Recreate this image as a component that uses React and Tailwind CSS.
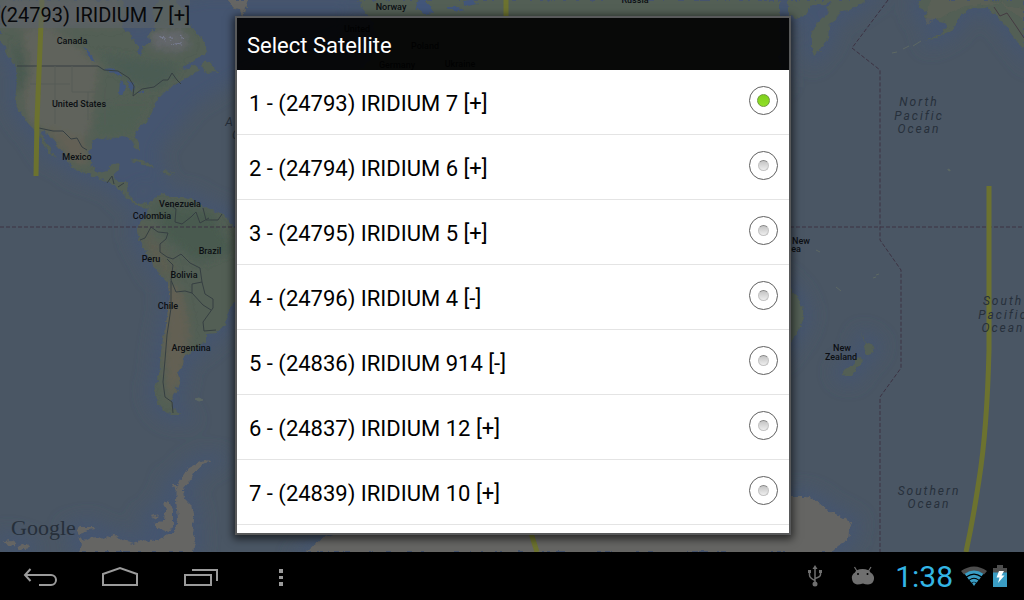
import { useState } from 'react';

const satellites = [
  { id: 24793, name: 'IRIDIUM 7 [+]' },
  { id: 24794, name: 'IRIDIUM 6 [+]' },
  { id: 24795, name: 'IRIDIUM 5 [+]' },
  { id: 24796, name: 'IRIDIUM 4 [-]' },
  { id: 24836, name: 'IRIDIUM 914 [-]' },
  { id: 24837, name: 'IRIDIUM 12 [+]' },
  { id: 24839, name: 'IRIDIUM 10 [+]' },
];

// Country labels, anchored on their centre.
const countries = [
  ['Canada', 72, 44],
  ['United States', 79, 107],
  ['Mexico', 77, 160],
  ['Venezuela', 180, 207],
  ['Colombia', 152, 219],
  ['Brazil', 210, 254],
  ['Peru', 151, 262],
  ['Bolivia', 184, 278],
  ['Chile', 168, 309],
  ['Argentina', 191, 351],
  ['Norway', 391, 10],
  ['Russia', 635, 3],
  ['United', 357, 32],
  ['Poland', 425, 49],
  ['Germany', 397, 68],
  ['Ukraine', 460, 67],
  ['New', 801, 244],
  ['ea', 796, 252],
  ['New', 842, 351],
  ['Zealand', 841, 360],
];

const oceans = [
  ['North', 919, 106],
  ['Pacific', 919, 120],
  ['Ocean', 919, 133],
  ['South', 1003, 305],
  ['Pacific', 1003, 319],
  ['Ocean', 1003, 332],
  ['Southern', 929, 495],
  ['Ocean', 929, 508],
  ['A', 230, 126],
  ['O', 237, 139],
];

const land = {
  northAmerica:
    'M0 0H122L126 14 122 28 130 33 134 43 138 47 138 54 142 55 143 46 150 41 149 34 156 26 152 12 158 0H176L184 10 190 24 197 33 204 42 208 50 204 56 196 60 188 63 181 68 188 69 196 64 200 70 192 75 184 80 178 83 168 89 160 97 153 107 150 117 141 126 135 134 139 143 139 150 135 148 131 138 122 136 112 139 101 138 92 142 89 151 92 165 98 173 107 171 111 165 119 163 117 171 113 178 119 182 128 182 127 191 133 200 140 204 147 202 148 205 140 207 132 203 124 194 116 186 108 182 100 178 88 174 76 170 69 165 67 158 59 147 51 137 44 130 40 133 48 145 57 159 52 156 44 146 38 134 27 122 20 112 15 100 17 82 16 67 9 57 4 46 0 40Z',
  southAmerica:
    'M140 205 148 204 157 196 163 193 168 197 185 197 197 201 203 208 215 211 224 214 232 226 240 232V296L235 300 229 313 224 325 217 333 206 334 206 342 198 348 190 353 184 357 183 365 177 373 180 381 176 391 172 399 173 407 181 415 171 415 163 410 157 402 154 391 159 375 161 352 164 333 168 312 169 294 168 282 156 271 149 257 141 244 137 235 138 226 144 218 148 209Z',
  alaska:
    'M919 0 918 8 928 12 924 17 935 20 945 22 948 26 942 33 924 41 934 39 950 31 958 23 960 16 970 8 984 7 996 14 1004 24 1012 35 1024 50V0Z',
  asia:
    'M788 0H866L851 10 840 11 836 20 830 24 828 38 822 48 814 56 811 47 811 35 816 24 827 13 830 2 822 5 812 5 806 15 797 18 788 15Z',
  europe: 'M358 0 362 8 372 20 378 40 370 60 350 80H780V0Z',
  greenland: 'M227 0 233 7 239 9 243 16 248 0Z',
  australia: 'M784 284 791 290 797 297 803 309 804 318 799 330 792 340 786 348Z',
  newZealand:
    'M861 333 866 342 874 345 871 353 866 355 863 348 865 343ZM858 356 863 360 857 368 852 376 845 376 842 372 852 365Z',
};

const ice = {
  west: 'M78 552 82 544 78 537 87 541 96 536 103 539 114 535 120 540 133 544 142 540 152 541 165 537 174 533 178 519 176 500 177 487 182 477 188 468 198 463 205 460 211 461 203 465 194 473 190 481 183 489 184 498 191 505 194 520 192 534 196 538 193 552ZM163 502 169 501 173 511 173 526 169 532 159 529 153 524 165 520 166 511Z',
  westIslets:
    'M76 530 82 527 94 527 95 530 88 531 80 534ZM4 541 12 540 16 546 9 547ZM18 546 27 544 30 548 20 550ZM152 517 158 515 156 519ZM172 484 177 484 176 492Z',
  south: 'M306 552 318 541 334 533H792V552Z',
  east: 'M784 497H806L818 502 828 511 843 518 853 524 849 531 848 540 839 546 833 552H784Z',
};

const borders =
  'M17 66H98L104 70 118 71 129 78 134 86 133 96 142 89 154 87 163 80 168 80 172 73 177 80 181 84M39 128 53 131 63 131 71 139 77 138 82 147 87 150M140 240 145 238 151 227 158 232 168 233M170 205 176 209 175 222 182 224 191 217 196 212 200 223 209 218M203 208 206 220 218 220 222 214M168 233 166 239 160 244 160 252 167 257 173 259 181 254 190 263 200 268 202 282M167 259 173 265 171 280 176 292 185 291 192 293 203 305 211 310M192 293 192 284 202 282 205 294 213 299 213 308 203 322 204 331 216 330M171 281 171 308 167 335 165 360 163 382 165 397 172 402 173 413M107 183 112 176 114 184M118 187 124 183';

function WorldMap() {
  return (
    <svg
      viewBox="0 0 1024 552"
      preserveAspectRatio="xMidYMid slice"
      className="absolute inset-0 size-full bg-[#4a5664]"
      aria-hidden="true"
    >
      <defs>
        <filter id="soft" x="-30%" y="-30%" width="160%" height="160%">
          <feGaussianBlur stdDeviation="9" />
        </filter>
        <filter id="patch" x="-20%" y="-20%" width="140%" height="140%">
          <feGaussianBlur stdDeviation="4" />
        </filter>
        {/* roughens the coastlines */}
        <filter id="coast" x="0" y="0" width="100%" height="100%">
          <feTurbulence type="fractalNoise" baseFrequency="0.18" numOctaves="3" seed="4" result="noise" />
          <feDisplacementMap in="SourceGraphic" in2="noise" scale="6" xChannelSelector="R" yChannelSelector="G" />
        </filter>
        <clipPath id="na">
          <path d={land.northAmerica} />
        </clipPath>
        <clipPath id="sa">
          <path d={land.southAmerica} />
        </clipPath>
      </defs>

      {/* shallow water along the coasts */}
      <g filter="url(#soft)" fill="#44556f" stroke="#44556f" strokeWidth="14">
        {Object.values(land).map((d) => <path key={d} d={d} />)}
        {Object.values(ice).map((d) => <path key={d} d={d} />)}
        <path d="M130 40 200 0H345V30L240 70 190 100 150 150 160 180 130 180 90 150V80Z" />
      </g>

      <g filter="url(#coast)">
        <g fill="#525e54">
          {Object.values(land).map((d) => <path key={d} d={d} />)}
          <path d="M130 161 138 159 148 162 156 168 150 167 141 163ZM160 171 167 170 174 173 168 174ZM201 66 206 60 210 62 218 72 206 73Z" />
        </g>
        <g fill="#656563">
          {Object.values(ice).map((d) => <path key={d} d={d} />)}
          <path d={land.greenland} />
        </g>

        <g clipPath="url(#na)">
          <g filter="url(#patch)">
            <path d="M22 30 50 28 70 40 88 55 100 66 96 90 90 130 84 142 70 140 30 125 22 100 30 72Z" fill="#61645b" />
            <path d="M45 128 84 140 90 160 76 166Z" fill="#636054" />
            <path d="M0 0H120V26H0Z" fill="#5f625f" />
            <path d="M150 32 180 28 192 45 178 52 152 48Z" fill="#63666a" />
            <path d="M100 55 136 60 180 66 160 88 135 84 112 66Z" fill="#4b5c52" />
            <path d="M16 40 26 60 24 95 16 90Z" fill="#4a5950" />
            <path d="M100 110 145 100 132 132 96 136Z" fill="#505e52" />
          </g>
        </g>
        <g clipPath="url(#sa)">
          <g filter="url(#patch)">
            <path d="M152 205 210 212 232 250 200 262 170 240Z" fill="#4a5a50" />
            <path d="M166 280 182 290 190 330 184 375 168 405 164 350Z" fill="#636052" />
            <path d="M138 222 150 260 168 280 176 270 156 240Z" fill="#5c5d51" />
          </g>
        </g>
        <path d="M925 25 965 6 1000 4 1024 20V10L990 0H930Z" fill="#606258" opacity=".6" />

        {/* lakes */}
        <path
          d="M104 69 112 68 119 72 122 77 116 75 109 72ZM120 82 124 80 125 88 122 96 119 94ZM127 80 134 83 133 92 129 86ZM136 92 144 89 142 92ZM84 46 90 52 95 62 90 60ZM418 0 416 8 424 13 434 14 430 6 426 0ZM446 6 456 12 464 10 454 6ZM464 2 474 0 478 4 466 6Z"
          fill="#43567a"
        />
        <path
          d="M160 37l5 1 1 4M168 36l5 3M175 43l7 1M180 36l4 3M170 45l6-1"
          fill="none"
          stroke="#777c90"
        />
      </g>

      <path
        d="M195 399l4-1 4 2 -4 1ZM948 169l2 1 0 1 -2-1ZM873 278l3-1M876 275l3-1M836 287l5 4M816 250l4 2M913 46l8-5M903 49l6-3M892 53l5-1"
        fill="#5d6863"
        stroke="#5d6863"
      />
      <path d={borders} fill="none" stroke="#363f42" />
      <path
        d="M40 72V95M55 66V124M72 66V92H96M72 105H98M30 84H70M88 92V120M105 88V125M115 105H146"
        fill="none"
        stroke="#565d57"
      />
      <path d="M994 7 1000 16 1007 13 1016 26 1024 38" fill="none" stroke="#453b42" />

      {/* date line and equator */}
      <path
        d="M888 0 852 48 880 70V240L901 270V368L880 397V552M0 227H240M784 227H1024"
        fill="none"
        stroke="#3c3242"
        strokeDasharray="4 2"
      />

      {/* satellite ground track */}
      <path
        d="M42 0Q39 70 37 120L36 176M506 0V20M530 530 537 552M989 186V350Q987 430 979 480 973 520 966 552"
        fill="none"
        stroke="#6c722f"
        strokeWidth="5"
      />

      <g className="fill-[#0c0f13] text-[9px] font-medium" textAnchor="middle">
        {countries.map(([name, x, y]) => (
          <text key={`${name}-${x}`} x={x} y={y}>{name}</text>
        ))}
      </g>
      <g className="fill-[#27303b] text-[12px] italic tracking-[2px]" textAnchor="middle">
        {oceans.map(([name, x, y]) => (
          <text key={`${x}-${y}`} x={x} y={y}>{name}</text>
        ))}
      </g>
      <text x="11" y="535" className="fill-[#262f3a] font-['Liberation_Serif',serif] text-[22px]">
        Google
      </text>
    </svg>
  );
}

function SatelliteDialog() {
  const [selected, setSelected] = useState(24793);

  return (
    <div
      role="dialog"
      aria-labelledby="dialog-title"
      className="relative flex max-h-full w-full max-w-[556px] flex-col border-2 border-[#58595a] shadow-[0_2px_8px_2px_rgba(0,0,0,0.6)]"
    >
      <h1 id="dialog-title" className="bg-black/90 px-2.5 pt-3 pb-2 text-[22px] leading-8 text-white">
        Select Satellite
      </h1>
      <ul className="overflow-hidden bg-white pb-2">
        {satellites.map((sat, i) => (
          <li key={sat.id} className="border-b border-[#e4e4e4]">
            <label className="flex h-16 items-center justify-between pr-[11px] pl-3 text-[22px] text-black">
              <span className="pt-0.5">{`${i + 1} - (${sat.id}) ${sat.name}`}</span>
              <input
                type="radio"
                name="satellite"
                checked={selected === sat.id}
                onChange={() => setSelected(sat.id)}
                className="mb-1 grid size-[29px] appearance-none place-content-center rounded-full border border-[#606060] before:size-[11px] before:rounded-full before:border before:border-[#c4c4c4] before:border-t-[#858585] before:bg-linear-to-b before:from-[#c4c4c4] before:to-[#eeeeee] checked:before:size-[13px] checked:before:border-[#6f9a3c] checked:before:from-[#7fd01c] checked:before:to-[#90e028]"
              />
            </label>
          </li>
        ))}
      </ul>
    </div>
  );
}

function NavButton({ label, children }) {
  return (
    <button type="button" aria-label={label} className="flex h-12 w-20 items-center justify-center">
      <svg width="40" height="24" viewBox="0 0 40 24" fill="none" stroke="#9b9b9b" strokeWidth="2">
        {children}
      </svg>
    </button>
  );
}

function SystemBar() {
  return (
    <footer className="flex h-12 shrink-0 items-center justify-between bg-black">
      <nav className="flex">
        <NavButton label="Back">
          <path d="M10.500 5 5 11 10.500 17M5 11H31A4.800 4.800 0 0 1 31 21H19" />
        </NavButton>
        <NavButton label="Home">
          <path d="M3 21V10L20 4 37 10V21Z" />
        </NavButton>
        <NavButton label="Recent apps">
          <path d="M5 11H31V21H5ZM12 6H37V17" />
        </NavButton>
        <NavButton label="Menu">
          <path d="M19 5H23V9H19ZM19 12H23V15H19ZM19 18H23V22H19Z" fill="#9b9b9b" stroke="none" />
        </NavButton>
      </nav>

      <div className="flex items-center pr-[17px]">
        <svg width="16" height="22" viewBox="0 0 16 22" fill="none" stroke="#6f6f6f" strokeWidth="1.500" className="mr-7">
          <path d="M8 3V18M2.500 7V10Q2.500 13 8 15.500M13.500 7V9.500Q13.500 12 8 13.500" />
          <path d="M8 0 10.500 4H5.500ZM1 5H4V8H1ZM12 5H15V8H12Z" fill="#6f6f6f" stroke="none" />
          <circle cx="8" cy="19" r="2.500" fill="#6f6f6f" stroke="none" />
        </svg>
        <svg width="24" height="20" viewBox="0 0 24 20" className="mr-5">
          <path d="M3.500 1 6.500 6M20 1 17 6" stroke="#6f6f6f" strokeWidth="1.200" />
          <path
            d="M1 13Q0 9 4 6.500 5 3 11.500 3 18 3 19.500 6.500 23.500 9 23 13 22.500 18 17 18.500 14 18.500 12 17.500 9 18.500 6 18.500 1.500 17.500 1 13Z"
            fill="#6f6f6f"
          />
          <circle cx="7" cy="8" r="1" fill="#000" />
          <circle cx="16.500" cy="8" r="1" fill="#000" />
        </svg>
        <time className="pt-0.5 text-[30px] leading-9 text-[#33b5e5]">1:38</time>
        <svg width="26" height="20" viewBox="0 0 26 20" className="ml-2">
          <path d="M0 5Q13 -4 26 5L23 8.500Q13 1.500 3 8.500Z" fill="#4d4d4d" />
          <g fill="none" stroke="#3a9dc4" strokeWidth="3">
            <path d="M4.500 9Q13 3 21.500 9" />
            <path d="M7 12.500Q13 8 19 12.500" />
            <path d="M9.500 15.500Q13 13 16.500 15.500" />
          </g>
          <path d="M11 17Q13 15.500 15 17L13 20Z" fill="#3a9dc4" />
        </svg>
        <svg width="14" height="22" viewBox="0 0 14 22" className="ml-1.5">
          <path d="M4 0H10V3H14V9H0V3H4Z" fill="#4d4d4d" />
          <path d="M0 7.500H14V22H0Z" fill="#3a9dc4" />
          <path d="M6 6H11L8.500 10.500H11.500L5 18 6.500 12.500H3.500Z" fill="#fff" />
        </svg>
      </div>
    </footer>
  );
}

export default function App() {
  return (
    <div className="flex h-screen flex-col overflow-hidden bg-black font-[Roboto,sans-serif]">
      <main className="relative min-h-0 flex-1 overflow-hidden">
        <WorldMap />
        <p className="absolute top-0 left-0 bg-[#5c6268]/60 pt-0.5 text-[20px] leading-[26px] text-[#08090b]">
          (24793) IRIDIUM 7 [+]
        </p>
        <div className="flex h-full items-start justify-center pt-4 pb-4 pl-0.5">
          <SatelliteDialog />
        </div>
      </main>
      <SystemBar />
    </div>
  );
}
